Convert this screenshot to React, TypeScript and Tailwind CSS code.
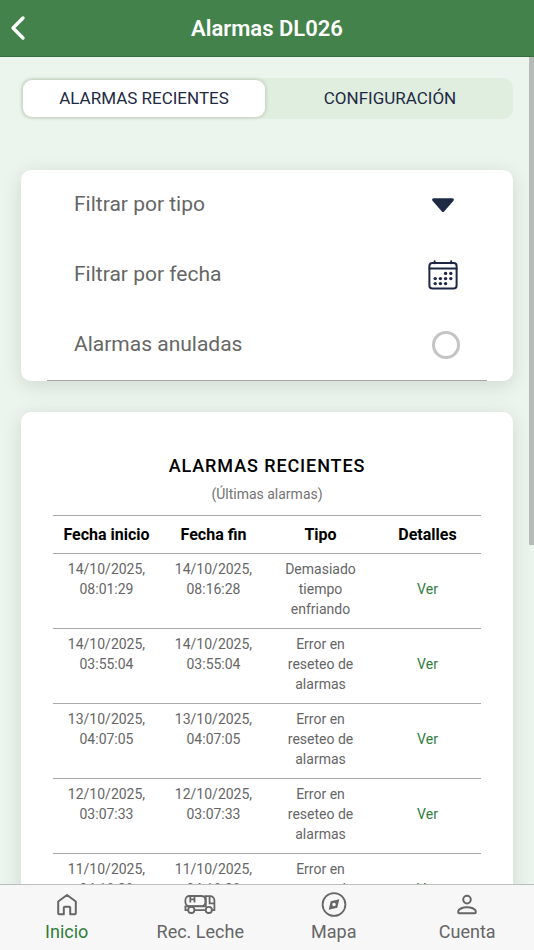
import { ChevronLeft } from "lucide-react";
import { useState } from "react";

interface Alarm {
  id: string;
  start: [string, string];
  end: [string, string];
  type: string;
}

const ALARMS: Alarm[] = [
  {
    id: "1",
    start: ["14/10/2025,", "08:01:29"],
    end: ["14/10/2025,", "08:16:28"],
    type: "Demasiado tiempo enfriando",
  },
  {
    id: "2",
    start: ["14/10/2025,", "03:55:04"],
    end: ["14/10/2025,", "03:55:04"],
    type: "Error en reseteo de alarmas",
  },
  {
    id: "3",
    start: ["13/10/2025,", "04:07:05"],
    end: ["13/10/2025,", "04:07:05"],
    type: "Error en reseteo de alarmas",
  },
  {
    id: "4",
    start: ["12/10/2025,", "03:07:33"],
    end: ["12/10/2025,", "03:07:33"],
    type: "Error en reseteo de alarmas",
  },
  {
    id: "5",
    start: ["11/10/2025,", "04:18:28"],
    end: ["11/10/2025,", "04:18:28"],
    type: "Error en reseteo de alarmas",
  },
];

const TABS = ["ALARMAS RECIENTES", "CONFIGURACIÓN"];
const COLUMNS = ["Fecha inicio", "Fecha fin", "Tipo", "Detalles"];

function CalendarIcon() {
  return (
    <svg width="30" height="30" viewBox="0 0 30 30" aria-hidden="true">
      <g fill="none" stroke="#1d2745" strokeWidth="2" strokeLinecap="round">
        <rect x="1.4" y="3" width="27.2" height="25.4" rx="3" />
        <path d="M1.4 8.6h27.2M6.6 1.2v2M23.2 1.2v2" />
      </g>
      <g fill="#1d2745">
        <circle cx="17.6" cy="13.4" r="1.7" />
        <circle cx="22.8" cy="13.4" r="1.7" />
        <circle cx="7.2" cy="18.6" r="1.7" />
        <circle cx="12.4" cy="18.6" r="1.7" />
        <circle cx="17.6" cy="18.6" r="1.7" />
        <circle cx="22.8" cy="18.6" r="1.7" />
        <circle cx="7.2" cy="23.6" r="1.7" />
        <circle cx="12.4" cy="23.6" r="1.7" />
        <circle cx="17.6" cy="23.6" r="1.7" />
      </g>
    </svg>
  );
}

function HomeIcon() {
  return (
    <svg width="26" height="26" viewBox="0 0 26 26" fill="none" stroke="currentColor" strokeWidth="2" strokeLinejoin="round">
      <path d="M4.2 9.5 13 3l8.8 6.500v11.8a1 1 0 0 1-1 1h-4.6v-6.6a1 1 0 0 0-1-1h-4.4a1 1 0 0 0-1 1v6.6H5.2a1 1 0 0 1-1-1z" />
    </svg>
  );
}

function TruckIcon() {
  return (
    <svg width="32" height="26" viewBox="0 0 32 26" fill="none" stroke="currentColor" strokeWidth="1.8" strokeLinejoin="round">
      <rect x="1.4" y="4" width="20" height="10.2" rx="4.2" />
      <path d="M6.3 4v6.4M10.500 4v6.4M6.3 7.4h4.2" />
      <path d="M20.2 4.2h6a4.2 4.2 0 0 1 4.2 4.2v9.8h-2.4M21.5 18.2H10.6M4 18.2H1.4v-4.6M1.4 14.4h20.4V4.4" />
      <path d="M25.6 4.4v7h4.8" />
      <circle cx="7.3" cy="17.9" r="3.1" />
      <circle cx="24.8" cy="17.9" r="3.1" />
    </svg>
  );
}

function CompassIcon() {
  return (
    <svg width="26" height="26" viewBox="0 0 26 26">
      <circle cx="13" cy="12.5" r="11.4" fill="none" stroke="currentColor" strokeWidth="1.8" />
      <path
        fill="currentColor"
        fillRule="evenodd"
        d="m18.3 7.2-2 8.6-8.6 2 2-8.6zM13 10.700a1.8 1.8 0 1 0 0 3.6 1.8 1.8 0 0 0 0-3.6z"
      />
    </svg>
  );
}

function UserIcon() {
  return (
    <svg width="26" height="26" viewBox="0 0 26 26" fill="none" stroke="currentColor" strokeWidth="2">
      <circle cx="13" cy="7.6" r="3.8" />
      <path d="M4.2 19.4c0-2.2 4.2-4.2 8.8-4.2s8.8 2 8.8 4.2v.8a1 1 0 0 1-1 1H5.2a1 1 0 0 1-1-1z" />
    </svg>
  );
}

const NAV = [
  { label: "Inicio", icon: HomeIcon },
  { label: "Rec. Leche", icon: TruckIcon },
  { label: "Mapa", icon: CompassIcon },
  { label: "Cuenta", icon: UserIcon },
];

function Filters() {
  const [cancelled, setCancelled] = useState(false);

  return (
    <section className="mt-[51px] rounded-[10px] bg-white px-[26px] text-[21px] text-[#666666] shadow-[0_4px_20px_rgba(0,0,0,0.12)]">
      <div className="border-b border-[#a9a9a9]">
        <div className="relative flex h-[70px] items-center">
          <select
            aria-label="Filtrar por tipo"
            className="h-full w-full appearance-none bg-transparent pl-[27px] outline-none"
          >
            <option>Filtrar por tipo</option>
          </select>
          <svg
            className="pointer-events-none absolute right-8 top-7"
            width="24"
            height="15"
            viewBox="0 0 24 15"
            fill="#1e2a44"
          >
            <path d="M2.6.2h18.8c1.3 0 2 1.5 1.1 2.5l-9.4 10.8a1.5 1.5 0 0 1-2.2 0L1.5 2.7C.6 1.7 1.3.2 2.6.2z" />
          </svg>
        </div>
        <button
          type="button"
          className="flex h-[70px] w-full items-center justify-between pl-[27px] pr-[29px]"
        >
          Filtrar por fecha
          <CalendarIcon />
        </button>
        <label className="flex h-[70px] items-center justify-between px-[27px]">
          Alarmas anuladas
          <input
            type="checkbox"
            checked={cancelled}
            onChange={(e) => setCancelled(e.target.checked)}
            className="size-7 appearance-none rounded-full border-[3px] border-[#c4c4c4] checked:border-[#43834b] checked:bg-[#43834b]"
          />
        </label>
      </div>
    </section>
  );
}

function AlarmTable() {
  return (
    <section className="mt-[31px] rounded-[10px] bg-white px-8 pt-[42px] pb-10 text-center shadow-[0_4px_20px_rgba(0,0,0,0.12)]">
      <h2 className="text-lg/6 font-medium tracking-wider text-black">
        ALARMAS RECIENTES
      </h2>
      <p className="mt-1 text-sm/6 text-[#737373]">(Últimas alarmas)</p>
      <table className="mt-[9px] w-full table-fixed border-collapse">
        <thead>
          <tr className="h-[38px] border-y border-[#a9a9a9]">
            {COLUMNS.map((c) => (
              <th key={c} className="text-base font-bold text-black">
                {c}
              </th>
            ))}
          </tr>
        </thead>
        <tbody className="text-sm/5 text-[#666666]">
          {ALARMS.map((a) => (
            <tr key={a.id} className="h-[75px] border-b border-[#a9a9a9]">
              <td className="pt-[5px] align-top">
                {a.start[0]}
                <br />
                {a.start[1]}
              </td>
              <td className="pt-[5px] align-top">
                {a.end[0]}
                <br />
                {a.end[1]}
              </td>
              <td className="px-4 pt-[5px] align-top">{a.type}</td>
              <td className="pb-1">
                <a href="#detalles" className="text-[#2f7d3b]">
                  Ver
                </a>
              </td>
            </tr>
          ))}
        </tbody>
      </table>
    </section>
  );
}

export default function App() {
  const [tab, setTab] = useState(0);
  const [page, setPage] = useState("Inicio");

  return (
    <div className="flex h-screen flex-col bg-[#ebf5ed] font-[Roboto,sans-serif]">
      <header className="grid h-[57px] shrink-0 grid-cols-[36px_1fr_36px] items-center border-b border-[#396f40] bg-[#43834b] text-white">
        <button type="button" aria-label="Volver" className="flex justify-center">
          <ChevronLeft className="size-10 shrink-0" strokeWidth={2} />
        </button>
        <h1 className="text-center text-[22px] font-semibold">Alarmas DL026</h1>
      </header>

      <div className="relative min-h-0 flex-1">
        <main className="h-full overflow-y-auto px-[21px] pt-[21px] [scrollbar-width:none]">
          <div className="grid h-[41px] grid-cols-2 gap-1 rounded-[10px] bg-[#dfeedf] p-[2px]">
            {TABS.map((t, i) => (
              <button
                key={t}
                type="button"
                onClick={() => setTab(i)}
                className={
                  tab === i
                    ? "rounded-[9px] bg-white text-[17px] text-[#1e2a44] shadow-[0_0_5px_rgba(0,0,0,0.2)]"
                    : "rounded-[9px] text-[17px] text-[#1e2a44]"
                }
              >
                {t}
              </button>
            ))}
          </div>
          <Filters />
          <AlarmTable />
        </main>
        <div className="absolute right-0 top-0 h-[59%] w-[5px] bg-[#b5bbb6]" />
      </div>

      <nav className="grid h-[66px] shrink-0 grid-cols-4 border-t border-[#bcbcbc] bg-[#f7f7f7] text-[#666666]">
        {NAV.map(({ label, icon: Icon }) => (
          <button
            key={label}
            type="button"
            onClick={() => setPage(label)}
            className="flex flex-col items-center pt-[7px]"
          >
            <Icon />
            <span
              className={
                page === label ? "text-lg/7 text-[#2f7d3b]" : "text-lg/7"
              }
            >
              {label}
            </span>
          </button>
        ))}
      </nav>
    </div>
  );
}
